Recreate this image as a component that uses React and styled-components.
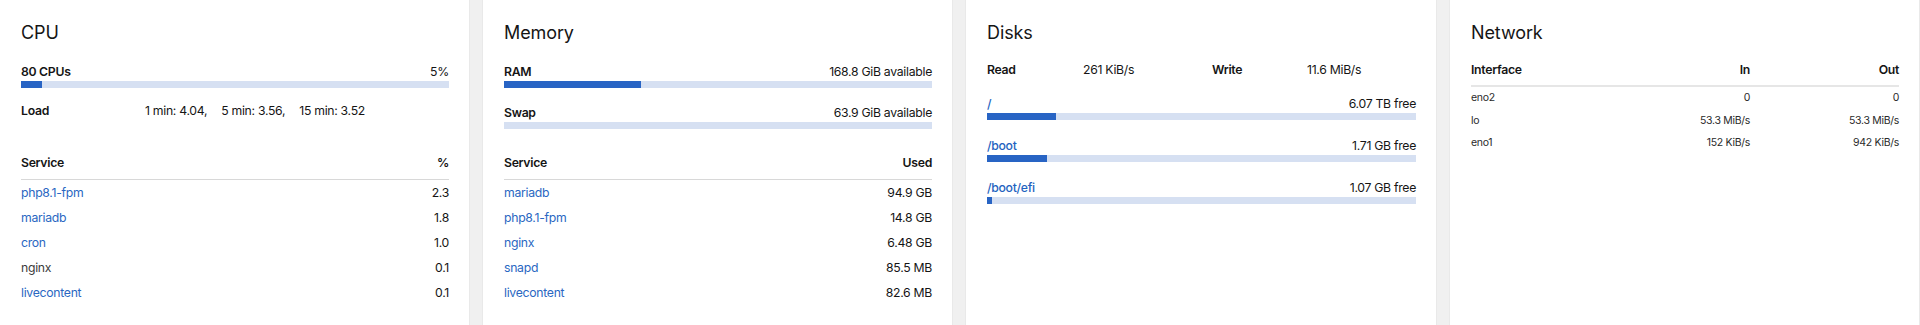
import React from "react";
import styled, { createGlobalStyle } from "styled-components";

const Global = createGlobalStyle`
  html, body { margin: 0; padding: 0; background: #f0f0f0; }
  body { width: 1920px; height: 325px; overflow: hidden; font-family: Inter, "Open Sans", sans-serif; color: #151515; letter-spacing: -0.3px; }
`;

const Grid = styled.div`
  display: grid;
  grid-template-columns: 469px 469px 470px 469px;
  column-gap: 14px;
  height: 325px;
`;

const Card = styled.section`
  background: #fff;
  padding: 21px 20px 0 21px;
  display: flex;
  flex-direction: column;
  box-shadow: 0 0 0 1px #e9e9e9;
`;

const Title = styled.h2`
  margin: 0;
  font-size: 18px;
  line-height: 23px;
  font-weight: 400;
  letter-spacing: -0.1px;
  color: #151515;
`;

const LabelRow = styled.div`
  display: flex;
  justify-content: space-between;
  align-items: center;
  font-size: 12.25px;
  line-height: ${(p) => p.$lh || 18}px;
  margin-top: ${(p) => p.$mt || 0}px;
`;

const Strong = styled.span`
  font-weight: 600;
`;

const DiskLink = styled.a`
  color: #1f63c0;
  font-weight: 500;
  text-decoration: none;
`;

const Bar = styled.div`
  height: 7px;
  background: #d6e0f2;
`;

const Fill = styled.div`
  height: 100%;
  background: #2864c4;
`;

const LoadRow = styled.div`
  display: flex;
  align-items: center;
  font-size: 12.25px;
  line-height: 18px;
  margin-top: 14px;
`;

const LoadLabel = styled.span`
  font-weight: 600;
  width: 124px;
`;

const LoadValues = styled.div`
  display: flex;
  gap: 14px;
`;

const Table = styled.div`
  margin-top: ${(p) => p.$mt}px;
  font-size: 12.25px;
`;

const HeadRow = styled.div`
  display: flex;
  justify-content: space-between;
  font-weight: 600;
  line-height: 18px;
  padding-bottom: 7px;
  border-bottom: 1px solid #d8d8d8;
`;

const Row = styled.div`
  display: flex;
  justify-content: space-between;
  align-items: center;
  height: 25px;
`;

const ServiceLink = styled.a`
  color: ${(p) => (p.$plain ? "#3c3c3c" : "#2a67c2")};
  text-decoration: none;
`;

const IoGrid = styled.div`
  display: grid;
  grid-template-columns: 96px 129px 95px 1fr;
  font-size: 12.25px;
  line-height: 18px;
  margin-top: 17px;
`;

const DiskList = styled.div`
  display: flex;
  flex-direction: column;
  gap: 16px;
  margin-top: 15px;
`;

const NetTable = styled.div`
  margin-top: 17px;
  display: grid;
  grid-template-columns: 1fr 149px 149px;
`;

const NetHead = styled.div`
  font-size: 12.25px;
  font-weight: 600;
  line-height: 18px;
  padding-bottom: 6px;
  border-bottom: 2px solid #e6e6e6;
  text-align: ${(p) => (p.$right ? "right" : "left")};
`;

const NetCell = styled.div`
  font-size: 10.5px;
  line-height: 22.5px;
  color: #2a2a2a;
  text-align: ${(p) => (p.$right ? "right" : "left")};
`;

const cpuServices = [
  ["php8.1-fpm", "2.3"],
  ["mariadb", "1.8"],
  ["cron", "1.0"],
  ["nginx", "0.1", true],
  ["livecontent", "0.1"],
];

const memServices = [
  ["mariadb", "94.9 GB"],
  ["php8.1-fpm", "14.8 GB"],
  ["nginx", "6.48 GB"],
  ["snapd", "85.5 MB"],
  ["livecontent", "82.6 MB"],
];

const disks = [
  ["/", "6.07 TB free", 16.1],
  ["/boot", "1.71 GB free", 14],
  ["/boot/efi", "1.07 GB free", 1.1],
];

const net = [
  ["eno2", "0", "0"],
  ["lo", "53.3 MiB/s", "53.3 MiB/s"],
  ["eno1", "152 KiB/s", "942 KiB/s"],
];

function ServiceTable({ head, rows, mt }) {
  return (
    <Table $mt={mt}>
      <HeadRow>
        <span>Service</span>
        <span>{head}</span>
      </HeadRow>
      {rows.map(([n, v, plain]) => (
        <Row key={n}>
          <ServiceLink $plain={plain} href="#">{n}</ServiceLink>
          <span>{v}</span>
        </Row>
      ))}
    </Table>
  );
}

function Meter({ pct }) {
  return (
    <Bar>
      <Fill style={{ width: `${pct}%` }} />
    </Bar>
  );
}

export default function App() {
  return (
    <>
      <Global />
      <Grid>
        <Card>
          <Title>CPU</Title>
          <LabelRow $mt={19}>
            <Strong>80 CPUs</Strong>
            <span>5%</span>
          </LabelRow>
          <Meter pct={5} />
          <LoadRow>
            <LoadLabel>Load</LoadLabel>
            <LoadValues>
              <span>1 min: 4.04,</span>
              <span>5 min: 3.56,</span>
              <span>15 min: 3.52</span>
            </LoadValues>
          </LoadRow>
          <ServiceTable head="%" rows={cpuServices} mt={34} />
        </Card>
        <Card>
          <Title>Memory</Title>
          <LabelRow $mt={19}>
            <Strong>RAM</Strong>
            <span>168.8 GiB available</span>
          </LabelRow>
          <Meter pct={32} />
          <LabelRow $mt={16}>
            <Strong>Swap</Strong>
            <span>63.9 GiB available</span>
          </LabelRow>
          <Meter pct={0} />
          <ServiceTable head="Used" rows={memServices} mt={25} />
        </Card>
        <Card>
          <Title>Disks</Title>
          <IoGrid>
            <Strong>Read</Strong>
            <span>261 KiB/s</span>
            <Strong>Write</Strong>
            <span>11.6 MiB/s</span>
          </IoGrid>
          <DiskList>
            {disks.map(([p, free, pct]) => (
              <div key={p}>
                <LabelRow $lh={19}>
                  <DiskLink href="#">{p}</DiskLink>
                  <span>{free}</span>
                </LabelRow>
                <Meter pct={pct} />
              </div>
            ))}
          </DiskList>
        </Card>
        <Card>
          <Title>Network</Title>
          <NetTable>
            <NetHead>Interface</NetHead>
            <NetHead $right>In</NetHead>
            <NetHead $right>Out</NetHead>
            {net.map(([i, a, b]) => (
              <React.Fragment key={i}>
                <NetCell>{i}</NetCell>
                <NetCell $right>{a}</NetCell>
                <NetCell $right>{b}</NetCell>
              </React.Fragment>
            ))}
          </NetTable>
        </Card>
      </Grid>
    </>
  );
}
